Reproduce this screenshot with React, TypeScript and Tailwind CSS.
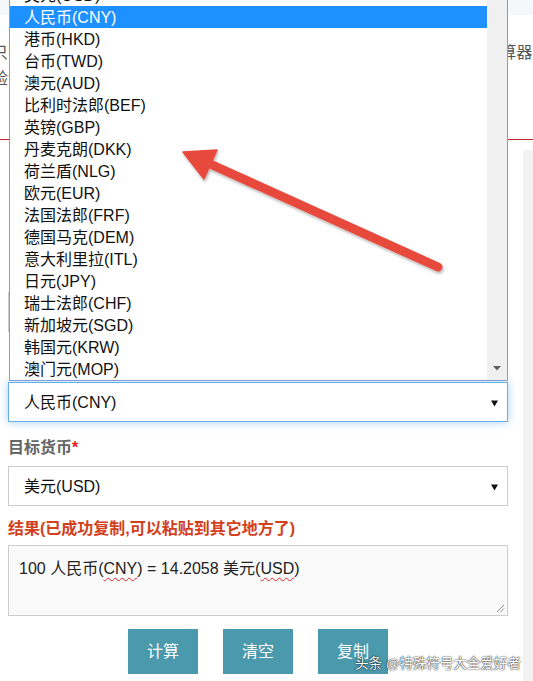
import React from "react";

const items = [
  "美元(USD)",
  "人民币(CNY)",
  "港币(HKD)",
  "台币(TWD)",
  "澳元(AUD)",
  "比利时法郎(BEF)",
  "英镑(GBP)",
  "丹麦克朗(DKK)",
  "荷兰盾(NLG)",
  "欧元(EUR)",
  "法国法郎(FRF)",
  "德国马克(DEM)",
  "意大利里拉(ITL)",
  "日元(JPY)",
  "瑞士法郎(CHF)",
  "新加坡元(SGD)",
  "韩国元(KRW)",
  "澳门元(MOP)",
];

function Caret() {
  return (
    <svg width="7" height="7" viewBox="0 0 7 7" className="shrink-0">
      <path d="M0 0.5 H7 L3.5 6.5 Z" fill="#111" />
    </svg>
  );
}

export default function App() {
  return (
    <div
      className="relative w-[533px] h-[681px] overflow-hidden bg-white"
      style={{ fontFamily: '"Liberation Sans", "Noto Sans CJK SC", sans-serif' }}
    >
      {/* header behind the open list */}
      <div className="h-[140px] border-b border-[#c4262e] bg-white">
        <div className="h-[15px] bg-[#f4f8fb]" />
        <div className="pt-[25px] -ml-[8px] whitespace-nowrap text-[15.9px] leading-[26px] text-[#555]">
          <div>只需输入金额并选择原货币与目标货币，即可快速得到结果的在线汇率计算器</div>
          <div>验证结果</div>
        </div>
      </div>

      <div className="flex">
        <div className="w-[523px] shrink-0 pl-[8px] pr-[15px] pt-[123px]">
          <div className="h-[22px] mb-[7px] pl-[4px] text-[16px] leading-[22px] font-bold text-[#666]">
            金额<span className="text-[#e02020]">*</span>
          </div>
          <div className="h-[40px] border border-[#ccc] bg-white" />

          <div className="mt-[21px] mb-[7px] h-[22px] pl-[4px] text-[16px] leading-[22px] font-bold text-[#666]">
            原货币<span className="text-[#e02020]">*</span>
          </div>

          {/* focused select with open list */}
          <div className="relative">
            <div className="absolute bottom-full left-[1px] right-0 mb-[1px] flex border border-[#7f9fd0] bg-white">
              <div className="flex-1">
                {items.map((it) => (
                  <div
                    key={it}
                    className={
                      "h-[22px] pl-[14px] pt-[1px] text-[16px] leading-[21px] " +
                      (it === "人民币(CNY)" ? "bg-[#1e90ff] text-white" : "text-[#111]")
                    }
                  >
                    {it}
                  </div>
                ))}
              </div>
              <div className="w-[20px] bg-[#f0f0f0] flex flex-col justify-end items-center pb-[9px]">
                <svg width="8" height="5" viewBox="0 0 8 5">
                  <path d="M0 0 H8 L4 4.5 Z" fill="#606060" />
                </svg>
              </div>
            </div>
            <div className="h-[40px] border border-[#66afe9] bg-white shadow-[0_0_8px_rgba(102,175,233,0.6)] flex items-center pl-[15px] pr-[9px] pt-[2px] text-[16px] text-[#111]">
              <span className="flex-1">人民币(CNY)</span>
              <Caret />
            </div>
          </div>

          <div className="mt-[15px] mb-[7px] h-[22px] text-[16px] leading-[22px] font-bold text-[#666]">
            目标货币<span className="text-[#e02020]">*</span>
          </div>
          <div className="h-[40px] border border-[#ccc] bg-white flex items-center pl-[15px] pr-[9px] pt-[2px] text-[16px] text-[#111]">
            <span className="flex-1">美元(USD)</span>
            <Caret />
          </div>

          <div className="mt-[12px] mb-[5px] h-[22px] text-[16px] leading-[22px] font-bold text-[#d2401c]">
            结果(已成功复制,可以粘贴到其它地方了)
          </div>
          <div className="relative h-[71px] border border-[#ccc] bg-[#fafafa] pl-[10px] pt-[12px] text-[16px] leading-[22px] text-[#222]">
            100 人民币(
            <span className="underline decoration-wavy decoration-[#e02020] decoration-1 underline-offset-[3px]">CNY</span>
            ) = 14.2058 美元(
            <span className="underline decoration-wavy decoration-[#e02020] decoration-1 underline-offset-[3px]">USD</span>
            )
            <svg className="absolute right-[2px] bottom-[2px]" width="9" height="9" viewBox="0 0 9 9">
              <path d="M1 8 L8 1 M4.5 8 L8 4.5" stroke="#8a8a8a" strokeWidth="1" />
            </svg>
          </div>

          <div className="mt-[13px] flex justify-center gap-[25px]">
            {["计算", "清空", "复制"].map((b) => (
              <div
                key={b}
                className="w-[70px] h-[45px] bg-[#4b99ad] text-white text-[16px] flex items-center justify-center"
              >
                {b}
              </div>
            ))}
          </div>
        </div>
        <div className="flex-1 mt-[10px] bg-[#f2f2f2] h-[600px]" />
      </div>

      {/* red annotation arrow */}
      <svg className="absolute left-0 top-0 pointer-events-none" width="533" height="681" viewBox="0 0 533 681">
        <defs>
          <filter id="sh" x="-20%" y="-20%" width="140%" height="140%">
            <feDropShadow dx="1" dy="2" stdDeviation="1.5" floodColor="#000" floodOpacity="0.3" />
          </filter>
        </defs>
        <g filter="url(#sh)">
          <line x1="438" y1="267" x2="208" y2="163" stroke="#e84a3e" strokeWidth="9" strokeLinecap="round" />
          <path d="M183 152 L217 150 L204 179 Z" fill="#e84a3e" stroke="#e84a3e" strokeWidth="1.5" strokeLinejoin="round" />
        </g>
      </svg>

      {/* watermark */}
      <div className="absolute left-[355px] top-[655px] text-[13.5px] leading-[18px] text-white whitespace-nowrap [text-shadow:0_0_1px_#000,0_0_2px_rgba(0,0,0,0.7)]">
        头条 @特殊符号大全爱好者
      </div>
    </div>
  );
}
